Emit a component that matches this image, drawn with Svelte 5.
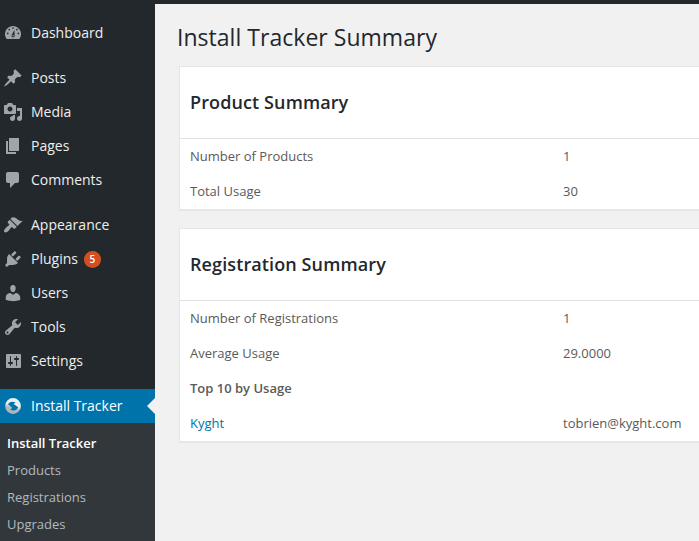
<script>
  const dash = 'M3.76 17h12.48c1.08-1.32 1.76-3 1.76-4.83C18 7.66 14.42 4 10 4s-8 3.66-8 8.17c0 1.83.68 3.51 1.76 4.83z';
  const groups = [
    [{ label: 'Dashboard', icon: 'dashboard', d: dash }],
    [
      { label: 'Posts', d: 'M10.44 3.02l1.82-1.82 6.36 6.35-1.83 1.82c-1.05-.68-2.48-.57-3.41.36l-.75.75c-.92.93-1.04 2.35-.35 3.41l-1.83 1.82-2.41-2.41-2.8 2.79c-.42.42-3.38 2.71-3.8 2.29s1.86-3.39 2.28-3.81l2.79-2.79L4.1 9.36l1.83-1.82c1.05.69 2.48.57 3.4-.36l.75-.75c.93-.92 1.05-2.35.36-3.41z' },
      { label: 'Media', d: 'M13 11V4c0-.55-.45-1-1-1h-1.67L9 1H5L3.67 3H2c-.55 0-1 .45-1 1v7c0 .55.45 1 1 1h10c.55 0 1-.45 1-1zM7 4.5c1.38 0 2.5 1.12 2.5 2.5S8.38 9.5 7 9.5 4.5 8.38 4.5 7 5.62 4.5 7 4.5zM14 6h5v10.5c0 1.38-1.12 2.5-2.5 2.5S14 17.88 14 16.5s1.12-2.5 2.5-2.5c.17 0 .34.02.5.05V9h-3V6zm-4 8.05V13h2v3.5c0 1.38-1.12 2.5-2.5 2.5S7 17.88 7 16.5 8.12 14 9.5 14c.17 0 .34.02.5.05z' },
      { label: 'Pages', d: 'M6 15V2h10v13H6zm-1 1h8v2H3V5h2v11z' },
      { label: 'Comments', d: 'M5 2h9c1.1 0 2 .9 2 2v7c0 1.1-.9 2-2 2h-2l-5 5v-5H5c-1.1 0-2-.9-2-2V4c0-1.1.9-2 2-2z' }
    ],
    [
      { label: 'Appearance', d: 'M14.48 11.06L7.41 3.99l1.5-1.5c.5-.56 2.3-.47 3.51.32 1.21.8 1.43 1.28 2.91 2.1 1.18.64 2.45 1.26 4.45.85zm-.71.71L6.7 4.7 4.93 6.47c-.39.39-.39 1.02 0 1.41l1.06 1.06c.39.39.39 1.03 0 1.42-.6.6-1.43 1.11-2.21 1.69-.35.26-.7.53-1.01.84C1.43 14.23.4 16.08 1.4 17.07c.99 1 2.84-.03 4.18-1.36.31-.31.58-.66.85-1.02.57-.78 1.08-1.61 1.69-2.21.39-.39 1.02-.39 1.41 0l1.06 1.06c.39.39 1.02.39 1.41 0z' },
      { label: 'Plugins', badge: 5, d: 'M13.11 4.36L9.87 7.6 8 5.73l3.24-3.24c.35-.34 1.05-.2 1.56.32.52.51.66 1.21.31 1.55zm-8 1.77l.91-1.12 9.01 9.01-1.19.84c-.71.71-2.63 1.16-3.82 1.16H6.14L4.9 17.26c-.59.59-1.54.59-2.12 0-.59-.58-.59-1.53 0-2.12l1.24-1.24v-3.88c0-1.13.4-3.19 1.09-3.89zm7.26 3.97l3.24-3.24c.34-.35 1.04-.21 1.55.31.52.51.66 1.21.31 1.55l-3.24 3.25z' },
      { label: 'Users', d: 'M10 9.25c-2.27 0-2.73-3.44-2.73-3.44C7 4.02 7.82 2 9.97 2c2.16 0 2.98 2.02 2.71 3.81 0 0-.41 3.44-2.68 3.44zm0 2.57L12.72 10c2.39 0 4.52 2.33 4.52 4.53v2.49s-3.65 1.13-7.24 1.13c-3.65 0-7.24-1.13-7.24-1.13v-2.49c0-2.25 1.94-4.48 4.47-4.48z' },
      { label: 'Tools', d: 'M16.68 9.77c-1.34 1.34-3.3 1.67-4.95.99l-5.41 6.52c-.99.99-2.59.99-3.58 0s-.99-2.59 0-3.57l6.52-5.42c-.68-1.65-.35-3.61.99-4.95 1.28-1.28 3.12-1.62 4.72-1.06l-2.89 2.89 2.82 2.82 2.86-2.87c.53 1.58.18 3.39-1.08 4.65zM3.81 16.21c.4.39 1.04.39 1.43 0 .4-.4.4-1.04 0-1.43-.39-.4-1.03-.4-1.43 0-.39.39-.39 1.03 0 1.43z' },
      { label: 'Settings', d: 'M18 16V4c0-.55-.45-1-1-1H4c-.55 0-1 .45-1 1v12c0 .55.45 1 1 1h13c.55 0 1-.45 1-1zM8 11h1c.55 0 1 .45 1 1s-.45 1-1 1H8v1.5c0 .28-.22.5-.5.5s-.5-.22-.5-.5V13H6c-.55 0-1-.45-1-1s.45-1 1-1h1V5.5c0-.28.22-.5.5-.5s.5.22.5.5V11zm5-2h-1c-.55 0-1-.45-1-1s.45-1 1-1h1V5.5c0-.28.22-.5.5-.5s.5.22.5.5V7h1c.55 0 1 .45 1 1s-.45 1-1 1h-1v5.5c0 .28-.22.5-.5.5s-.5-.22-.5-.5V9z' }
    ],
    [{ label: 'Install Tracker', icon: 'tracker', current: true }]
  ];
  const submenu = ['Install Tracker', 'Products', 'Registrations', 'Upgrades'];
  const cards = [
    { title: 'Product Summary', rows: [
      { name: 'Number of Products', value: '1' },
      { name: 'Total Usage', value: '30' }
    ] },
    { title: 'Registration Summary', rows: [
      { name: 'Number of Registrations', value: '1' },
      { name: 'Average Usage', value: '29.0000' },
      { name: 'Top 10 by Usage', value: '', kind: 'strong' },
      { name: 'Kyght', value: 'tobrien@kyght.com', kind: 'link' }
    ] }
  ];
</script>

<div class="admin">
  <nav>
    {#each groups as group}
      <ul class="group">
        {#each group as item}
          <li class="item" class:current={item.current}>
            <svg class="icon" viewBox="0 0 20 20" aria-hidden="true">
              {#if item.icon === 'tracker'}
                <defs>
                  <linearGradient id="disc" x1="0.65" y1="0" x2="0.35" y2="1">
                    <stop offset="0.45" stop-color="#eceff1" />
                    <stop offset="0.65" stop-color="#b3b5b7" />
                  </linearGradient>
                </defs>
                <circle cx="10" cy="10" r="7.9" fill="url(#disc)" />
                <path d="M5 8.3C6.2 5.6 9.6 5 12.6 6.6L10.6 8L15.2 11.3C14 14.6 10.4 15.2 7.2 13.4L9.4 12Z" fill="#0073aa" />
              {:else}
                <path d={item.d} />
                {#if item.icon === 'dashboard'}
                  <g class="holes">
                    <circle cx="10" cy="6" r=".85" /><circle cx="6.2" cy="7.6" r=".85" />
                    <circle cx="13.9" cy="7.6" r=".85" /><circle cx="4.7" cy="11.4" r=".85" />
                    <circle cx="15.4" cy="11.4" r=".85" />
                    <path d="M11.4 8L11.6 13.7c0 1-.7 1.7-1.6 1.7-1 0-1.7-.8-1.5-1.8z" />
                  </g>
                  <circle cx="10" cy="13.7" r=".8" />
                {/if}
              {/if}
            </svg>
            <span>{item.label}</span>
            {#if item.badge}<span class="badge">{item.badge}</span>{/if}
          </li>
        {/each}
      </ul>
    {/each}
    <ul class="submenu">
      {#each submenu as entry, i}
        <li class:selected={i === 0}>{entry}</li>
      {/each}
    </ul>
  </nav>

  <main>
    <h1>Install Tracker Summary</h1>
    {#each cards as card}
      <section>
        <h2>{card.title}</h2>
        {#each card.rows as row}
          <div class="row">
            <span class="name {row.kind ?? ''}">{row.name}</span>
            <span>{row.value}</span>
          </div>
        {/each}
      </section>
    {/each}
  </main>
</div>

<style>
  .admin {
    display: flex;
    box-sizing: border-box;
    width: 699px;
    height: 541px;
    padding-top: 4px;
    overflow: hidden;
    background: #23282d;
    font: 13px/18px 'Open Sans', 'Noto Sans', sans-serif;
    color: #5a5a5a;
  }
  ul { list-style: none; margin: 0; padding: 0; }
  nav {
    flex: 0 0 155px;
    display: flex;
    flex-direction: column;
    padding-top: 12px;
  }
  .group { margin-bottom: 11px; }
  .group:nth-of-type(4) { margin-bottom: 0; }
  .item {
    display: flex;
    align-items: center;
    height: 34px;
    padding-left: 3px;
    color: #eee;
    font-size: 14px;
  }
  .icon { width: 20px; height: 20px; margin-right: 8px; fill: #a0a5aa; }
  .group:first-child .icon { margin-top: -2px; }
  .holes { fill: #23282d; }
  .badge {
    width: 17px;
    height: 17px;
    margin-left: 6px;
    border-radius: 50%;
    background: #d54e21;
    color: #fff;
    font-size: 10px;
    font-weight: 600;
    line-height: 17px;
    text-align: center;
  }
  .current { position: relative; background: #0073aa; color: #fff; }
  .current::after {
    content: '';
    position: absolute;
    right: 0;
    top: 9px;
    border: 8px solid transparent;
    border-left: 0;
    border-right-color: #f1f1f1;
  }
  .submenu { flex: 1; padding-top: 7px; background: #32373c; }
  .submenu li {
    height: 27px;
    padding-left: 7px;
    line-height: 27px;
    color: #b4b9be;
  }
  .submenu .selected { color: #fff; font-weight: 600; }
  main { flex: 1; min-width: 0; padding-left: 24px; background: #f1f1f1; }
  h1 {
    margin: 0 0 14px -2px;
    padding-top: 19px;
    font-size: 23px;
    font-weight: 400;
    letter-spacing: 0.03px;
    line-height: 29px;
    color: #23282d;
  }
  section {
    width: 760px;
    margin-bottom: 18px;
    border: 1px solid #e5e5e5;
    background: #fff;
    box-shadow: 0 1px 1px rgba(0, 0, 0, 0.04);
  }
  h2 {
    margin: 0;
    padding-left: 10px;
    border-bottom: 1px solid #e1e1e1;
    font-size: 18px;
    font-weight: 600;
    letter-spacing: 0.11px;
    line-height: 71px;
    color: #23282d;
  }
  .row { display: flex; padding-left: 10px; line-height: 35px; }
  .name { flex: 0 0 373px; }
  .strong { font-weight: 600; }
  .link { color: #0073aa; }
</style>
